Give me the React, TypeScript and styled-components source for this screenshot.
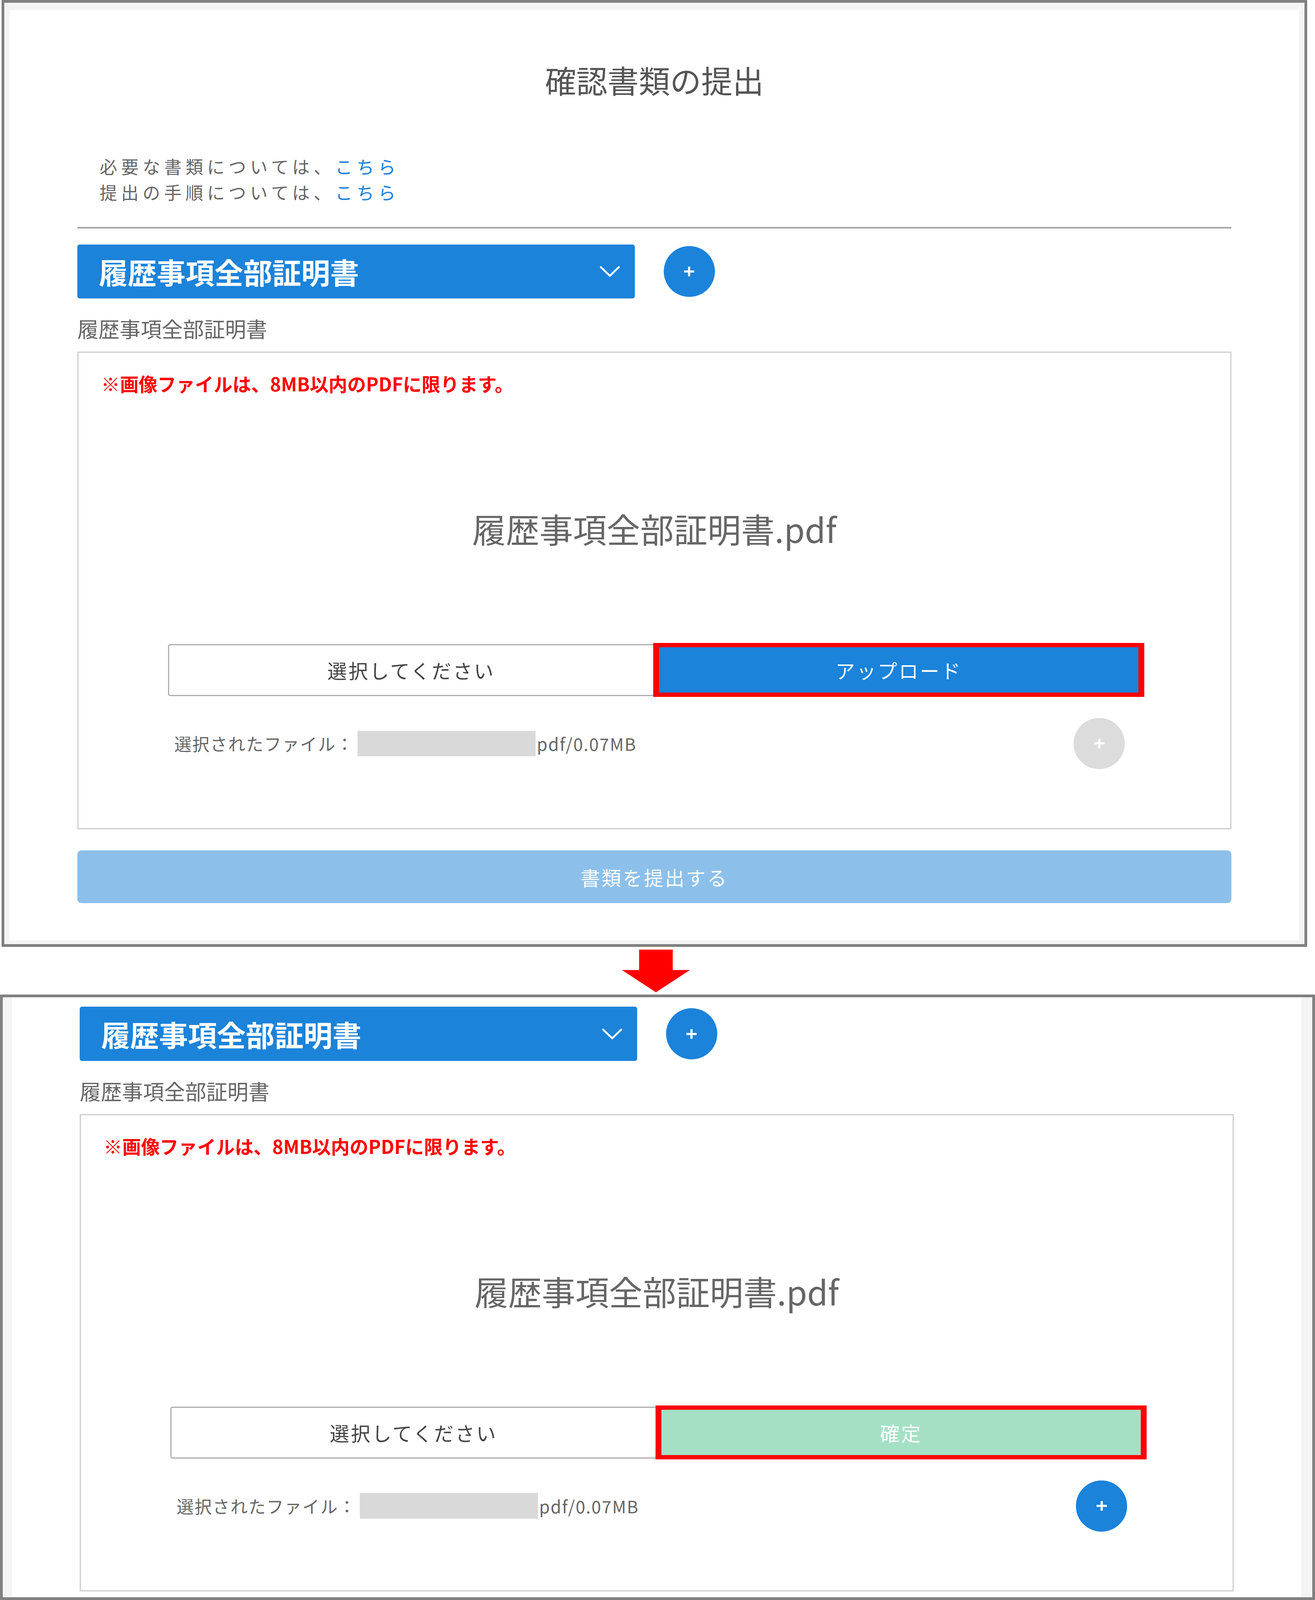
import React from "react";
import styled, { createGlobalStyle } from "styled-components";

/* Vertical sizes follow the reference's 5171px-tall frame and are scaled to the real viewport height. */
const V = (n: number) => `calc(${n} * 100vh / 5171)`;
const CIRCLE = V(165);
const CIRCLE_SHIFT = `calc((165px - ${CIRCLE}) / 2)`;

const GlobalStyle = createGlobalStyle`
  html, body { margin: 0; padding: 0; background: #ffffff; overflow: hidden; }
  body { font-family: "Noto Sans CJK JP", "Noto Sans", sans-serif; }
  * { box-sizing: border-box; }
`;

const Page = styled.div`
  width: 3366px;
  height: 100vh;
  background: #ffffff;
  display: flex;
  flex-direction: column;
  overflow: hidden;
`;

const Frame = styled.section<{ $width: number; $h: number; $ml: number; $pad: string }>`
  width: ${(p) => p.$width}px;
  height: ${(p) => V(p.$h)};
  margin-left: ${(p) => p.$ml}px;
  border: 7px solid #808080;
  border-radius: 2px;
  padding: ${(p) => p.$pad};
  background: #f4f4f4;
  display: flex;
  flex-direction: column;
  flex-shrink: 0;
`;

const Sheet = styled.div<{ $pt: number }>`
  flex: 1;
  background: #ffffff;
  padding: ${(p) => V(p.$pt)} 173px 0;
  display: flex;
  flex-direction: column;
`;

const Title = styled.h1`
  margin: ${V(163)} 0 0;
  height: ${V(120)};
  display: flex;
  align-items: center;
  justify-content: center;
  font-size: 80px;
  line-height: 1;
  font-weight: 400;
  color: #555555;
`;

const Links = styled.div`
  margin-top: ${V(179)};
  padding-left: 57px;
  font-size: 45px;
  letter-spacing: 10px;
  color: #666666;
`;

const LinkLine = styled.div`
  height: ${V(84)};
  display: flex;
  align-items: center;
  line-height: 1;
`;

const Link = styled.a`
  color: #1b80d8;
  text-decoration: none;
`;

const Divider = styled.div`
  margin-top: ${V(71)};
  height: 4px;
  background: #a3a3a3;
  flex-shrink: 0;
`;

const SelectRow = styled.div<{ $mt: number }>`
  margin-top: ${(p) => V(p.$mt)};
  display: flex;
  align-items: center;
  gap: calc(57px + ${CIRCLE_SHIFT});
`;

const Select = styled.div`
  width: 1427px;
  height: ${V(175)};
  background: #1b83da;
  border-radius: 6px;
  display: flex;
  align-items: center;
  justify-content: space-between;
  padding: 0 38px 0 55px;
  color: #ffffff;
  font-size: 74px;
  line-height: 1;
  font-weight: 700;
`;

const AddButton = styled.div<{ $bg: string; $mr?: boolean }>`
  width: ${CIRCLE};
  height: ${CIRCLE};
  margin-right: ${(p) => (p.$mr ? CIRCLE_SHIFT : "0")};
  border-radius: 50%;
  background: ${(p) => p.$bg};
  display: flex;
  align-items: center;
  justify-content: center;
  flex-shrink: 0;
`;

const Label = styled.div`
  margin-top: ${V(57)};
  height: ${V(80)};
  display: flex;
  align-items: center;
  font-size: 54px;
  line-height: 1;
  color: #666666;
`;

const Card = styled.div`
  margin-top: ${V(35)};
  height: ${V(1543)};
  border: 3px solid #cdcdcd;
  display: flex;
  flex-direction: column;
  flex-shrink: 0;
`;

const Note = styled.div`
  margin: ${V(63)} 0 0 58px;
  height: ${V(70)};
  display: flex;
  align-items: center;
  font-size: 48px;
  line-height: 1;
  font-weight: 700;
  color: #ff0000;
`;

const FileName = styled.div`
  margin-top: ${V(375)};
  height: ${V(120)};
  display: flex;
  align-items: center;
  justify-content: center;
  font-size: 86px;
  line-height: 1;
  color: #666666;
`;

const ButtonRow = styled.div`
  margin: ${V(310)} 0 0 229px;
  height: ${V(174)};
  display: flex;
  align-items: center;
`;

const ChooseButton = styled.div`
  width: 1242px;
  height: ${V(168)};
  border: 3px solid #adadad;
  border-right: none;
  border-radius: 6px 0 0 6px;
  background: #ffffff;
  display: flex;
  align-items: center;
  justify-content: center;
  font-size: 50px;
  line-height: 1;
  letter-spacing: 4px;
  color: #444444;
`;

const ActionButton = styled.div<{ $bg: string }>`
  width: 1257px;
  height: ${V(174)};
  border-style: solid;
  border-color: #ff0000;
  border-width: ${V(15)} 15px;
  background: ${(p) => p.$bg};
  display: flex;
  align-items: center;
  justify-content: center;
  font-size: 50px;
  line-height: 1;
  letter-spacing: 4px;
  color: #ffffff;
`;

const FileRow = styled.div`
  margin: ${V(68)} 0 0 245px;
  width: 2450px;
  height: ${V(165)};
  display: flex;
  align-items: center;
  justify-content: space-between;
`;

const FileInfo = styled.div`
  display: flex;
  align-items: center;
  font-size: 44px;
  line-height: 1;
  letter-spacing: 2px;
  color: #666666;
`;

const Masked = styled.span`
  display: inline-block;
  width: 456px;
  height: ${V(83)};
  background: #d9d9d9;
  margin: 0 3px 0 9px;
`;

const Submit = styled.div`
  margin-top: ${V(69)};
  height: ${V(170)};
  background: #8cc0ea;
  border-radius: 10px;
  display: flex;
  align-items: center;
  justify-content: center;
  font-size: 50px;
  line-height: 1;
  letter-spacing: 4px;
  color: #ffffff;
  flex-shrink: 0;
`;

const ArrowWrap = styled.div`
  height: ${V(154)};
  padding: ${V(9)} 0 0 1592px;
  flex-shrink: 0;
  display: flex;
  align-items: flex-start;
`;

const ArrowSvg = styled.svg`
  width: 174px;
  height: ${V(138)};
  display: block;
`;

const Chevron = () => (
  <svg width="52" height="28" viewBox="0 0 52 30" preserveAspectRatio="none">
    <polyline points="3,3 26,27 49,3" fill="none" stroke="#ffffff" strokeWidth="5" strokeLinecap="round" strokeLinejoin="round" />
  </svg>
);

const Plus = () => (
  <svg width="32" height="30" viewBox="0 0 34 34" preserveAspectRatio="none">
    <line x1="17" y1="3" x2="17" y2="31" stroke="#ffffff" strokeWidth="6" />
    <line x1="3" y1="17" x2="31" y2="17" stroke="#ffffff" strokeWidth="6" />
  </svg>
);

const DownArrow = () => (
  <ArrowSvg viewBox="0 0 174 138" preserveAspectRatio="none">
    <rect x="44" y="0" width="86" height="67" fill="#ff0000" />
    <polygon points="0,66 174,66 87,138" fill="#ff0000" />
  </ArrowSvg>
);

const DocName = "履歴事項全部証明書";

type UploadCardProps = { action: string; actionBg: string; addBg: string };

const UploadCard = ({ action, actionBg, addBg }: UploadCardProps) => (
  <Card>
    <Note>※画像ファイルは、8MB以内のPDFに限ります。</Note>
    <FileName>{DocName}.pdf</FileName>
    <ButtonRow>
      <ChooseButton>選択してください</ChooseButton>
      <ActionButton $bg={actionBg}>{action}</ActionButton>
    </ButtonRow>
    <FileRow>
      <FileInfo>
        選択されたファイル：<Masked />pdf/0.07MB
      </FileInfo>
      <AddButton $bg={addBg} $mr>
        <Plus />
      </AddButton>
    </FileRow>
  </Card>
);

const DocSelect = ({ mt }: { mt: number }) => (
  <SelectRow $mt={mt}>
    <Select>
      <span>{DocName}</span>
      <Chevron />
    </Select>
    <AddButton $bg="#1b83da">
      <Plus />
    </AddButton>
  </SelectRow>
);

export default function App() {
  return (
    <>
      <GlobalStyle />
      <Page>
        <Frame $width={3342} $h={3060} $ml={4} $pad={`${V(24)} 14px ${V(13)} 14px`}>
          <Sheet $pt={0}>
            <Title>確認書類の提出</Title>
            <Links>
              <LinkLine>
                必要な書類については、<Link>こちら</Link>
              </LinkLine>
              <LinkLine>
                提出の手順については、<Link>こちら</Link>
              </LinkLine>
            </Links>
            <Divider />
            <DocSelect mt={51} />
            <Label>{DocName}</Label>
            <UploadCard action="アップロード" actionBg="#1b83da" addBg="#dcdcdc" />
            <Submit>書類を提出する</Submit>
          </Sheet>
        </Frame>
        <ArrowWrap>
          <DownArrow />
        </ArrowWrap>
        <Frame $width={3366} $h={1957} $ml={0} $pad="0 28px 0 24px">
          <Sheet $pt={31}>
            <DocSelect mt={0} />
            <Label>{DocName}</Label>
            <UploadCard action="確定" actionBg="#a5e0c5" addBg="#1b83da" />
          </Sheet>
        </Frame>
      </Page>
    </>
  );
}
